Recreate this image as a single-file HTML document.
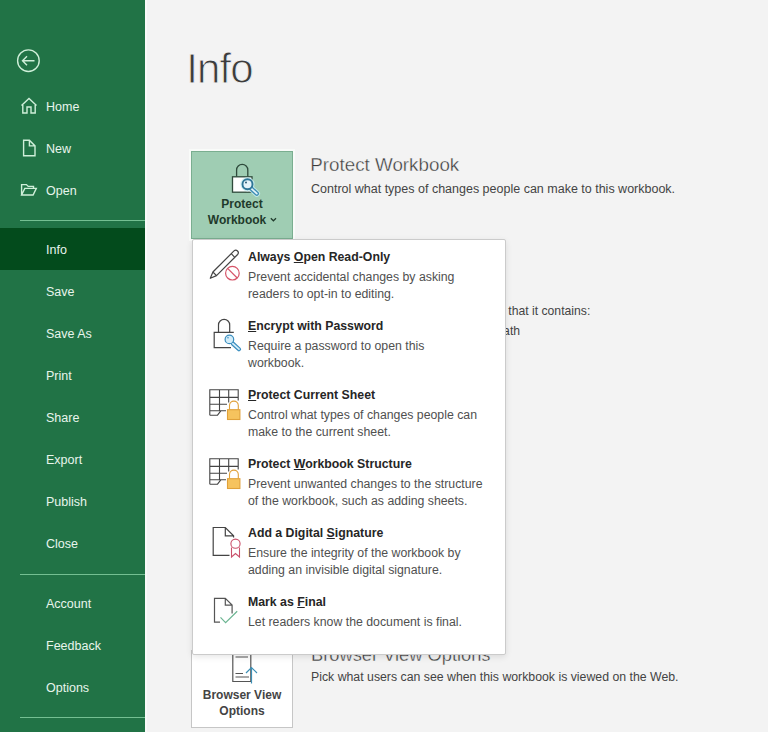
<!DOCTYPE html>
<html><head><meta charset="utf-8">
<style>
*{margin:0;padding:0;box-sizing:border-box}
html,body{width:768px;height:732px;overflow:hidden;background:#F3F3F3;font-family:"Liberation Sans",sans-serif}
.a{position:absolute;white-space:nowrap}
#side{position:absolute;left:0;top:0;width:145px;height:732px;background:#217346}
.si{position:absolute;left:46px;font-size:12.5px;line-height:12.5px;color:#E8F5EC}
.sep{position:absolute;left:20px;width:125px;height:1px;background:#74BF92}
#sel{position:absolute;left:0;top:228px;width:145px;height:42px;background:#034B1C}
svg{position:absolute;overflow:visible}
.mt{color:#444}
.dd{position:absolute;left:192px;top:239px;width:314px;height:416px;background:#fff;border:1px solid #CBCBCB;border-radius:2px;box-shadow:0 2px 6px rgba(0,0,0,0.10)}
.it{position:absolute;left:248px;font-size:12.3px;color:#505050;white-space:nowrap}
.tt{font-weight:bold;color:#262626;line-height:12.3px}
.dsc{line-height:17px}
u{text-decoration:underline;text-underline-offset:1px}
</style></head><body>
<div class="a" style="left:145px;top:0;width:2px;height:732px;background:#F9FAF9"></div>
<div id="side">
  <div id="sel"></div>
  <!-- back -->
  <svg style="left:0;top:0" width="145" height="732">
    <g fill="none" stroke="#CFEFD9" stroke-width="1.4">
      <circle cx="28.4" cy="60.7" r="10.8"/>
      <path d="M22.5 60.7H34.5M27 56.2L22.5 60.7L27 65.2"/>
      <!-- home -->
      <path d="M21.5 105.5L29 98.5L36.5 105.5M22.8 104.3V113H27V107H31V113H35.2V104.3"/>
      <!-- new -->
      <path d="M23.6 140.3H29.4L35 145.9V155.8H23.6Z M29.4 140.3V145.9H35"/>
      <!-- open -->
      <path d="M21.6 195V184.6H26.4L28.2 186.4H33.5V188.4M21.6 195L24.8 188.4H36.3L33.1 195Z"/>
    </g>
  </svg>
  <div class="si" style="top:100.7px">Home</div>
  <div class="si" style="top:142.7px">New</div>
  <div class="si" style="top:185.2px">Open</div>
  <div class="sep" style="top:220px"></div>
  <div class="si" style="top:244.2px">Info</div>
  <div class="si" style="top:286.2px">Save</div>
  <div class="si" style="top:328.2px">Save As</div>
  <div class="si" style="top:370.2px">Print</div>
  <div class="si" style="top:412.2px">Share</div>
  <div class="si" style="top:454.2px">Export</div>
  <div class="si" style="top:496.2px">Publish</div>
  <div class="si" style="top:538.2px">Close</div>
  <div class="sep" style="top:574px"></div>
  <div class="si" style="top:597.9px">Account</div>
  <div class="si" style="top:639.9px">Feedback</div>
  <div class="si" style="top:682.2px">Options</div>
  <div class="sep" style="top:717px"></div>
</div>

<!-- Info title -->
<div class="a" style="left:186.2px;top:48.4px;font-size:42px;line-height:42px;color:#3C3C3C;letter-spacing:-0.9px;-webkit-text-stroke:0.9px #F3F3F3">Info</div>

<!-- Protect workbook button -->
<div class="a" style="left:191px;top:151px;width:102px;height:88px;background:#9FCDB3;border:1px solid #7AAE90;box-shadow:0 0 0 2px #F9FBF9"></div>
<svg style="left:0;top:0" width="768" height="732">
  <g fill="none" stroke="#2E4A3B" stroke-width="1.3">
    <path d="M236.6 176.8V170A5.6 5.6 0 0 1 247.8 170V176.8"/>
    <rect x="232.5" y="176.8" width="19.5" height="15.4" fill="#fff"/>
  </g>
  <g fill="none" stroke="#C8EEF2" stroke-linecap="round" opacity="0.8">
    <circle cx="247.5" cy="184.3" r="5.6" stroke-width="3"/>
    <path d="M250.8 188.2L256.8 193.6" stroke-width="6.5"/>
  </g>
  <g stroke="#2F7697" stroke-width="1.4" fill="#E4F4FA">
    <path d="M250.8 188.2L256.8 193.6" stroke="#3D8DB5" stroke-width="4.4" stroke-linecap="round"/>
    <path d="M250.8 188.2L256.8 193.6" stroke="#E4F4FA" stroke-width="1.8" stroke-linecap="round"/>
    <circle cx="247.5" cy="184.3" r="5" stroke-width="1.9"/>
    <circle cx="246" cy="182.4" r="1" fill="#2E5E76" stroke="none"/>
  </g>
</svg>
<div class="a" style="left:191px;top:198.4px;width:102px;text-align:center;font-size:12px;line-height:12px;font-weight:bold;color:#1F3A2B">Protect</div>
<div class="a" style="left:191px;top:214.3px;width:102px;text-align:center;font-size:12px;line-height:12px;font-weight:bold;color:#1F3A2B;padding-right:10px">Workbook</div>
<svg style="left:0;top:0" width="768" height="732"><path d="M270.8 218.3L273.4 220.8L276 218.3" fill="none" stroke="#1F3A2B" stroke-width="1.2"/></svg>

<div class="a mt" style="left:310.3px;top:155.6px;font-size:18.8px;line-height:18.8px;color:#3A3A3A;-webkit-text-stroke:0.35px #F3F3F3">Protect Workbook</div>
<div class="a mt" style="left:311px;top:182.7px;font-size:12.5px;line-height:12.5px">Control what types of changes people can make to this workbook.</div>

<!-- hidden inspect texts -->
<div class="a mt" style="left:312.5px;top:304.7px;font-size:12.2px;line-height:12.2px">Before publishing this file, be aware that it contains:</div>
<div class="a mt" style="left:223px;top:324.5px;font-size:12.2px;line-height:12.2px">Document properties, author's name and absolute path</div>

<!-- Browser view options -->
<div class="a" style="left:191px;top:650px;width:102px;height:78px;background:#fff;border:1px solid #C6C6C6"></div>
<svg style="left:0;top:0" width="768" height="732">
  <g fill="none" stroke="#555" stroke-width="1.2">
    <path d="M232.8 640V681.5H250.8V640"/>
    <path d="M235.5 657H248 M235.5 673.5H243 M235.5 677H249"/>
  </g>
  <g fill="none" stroke="#3C8FB5" stroke-width="1.2">
    <path d="M251.5 683.5V667.5M246 673L251.5 667.5L257 673"/>
  </g>
</svg>
<div class="a" style="left:191px;top:688.5px;width:102px;text-align:center;font-size:12px;line-height:12px;font-weight:bold;color:#444">Browser View</div>
<div class="a" style="left:191px;top:705px;width:102px;text-align:center;font-size:12px;line-height:12px;font-weight:bold;color:#444">Options</div>
<div class="a mt" style="left:311px;top:645.8px;font-size:18.3px;line-height:18.3px;color:#3A3A3A;-webkit-text-stroke:0.35px #F3F3F3">Browser View Options</div>
<div class="a mt" style="left:311px;top:671.2px;font-size:12.3px;line-height:12.3px">Pick what users can see when this workbook is viewed on the Web.</div>

<!-- dropdown -->
<div class="dd"></div>
<svg style="left:0;top:0" width="768" height="732">
  <!-- pencil -->
  <g fill="none" stroke="#444" stroke-width="1.2" stroke-linejoin="round">
    <path d="M210.3 278.3L212.9 272L234 250.9A2.55 2.55 0 0 1 237.6 254.5L216.5 275.6Z M212.9 272L216.5 275.6 M231.2 253.7L234.8 257.3"/>
  </g>
  <g fill="none" stroke="#D65468" stroke-width="1.2">
    <circle cx="232.4" cy="273.2" r="6.8"/>
    <path d="M227.6 268.4L237.2 278"/>
  </g>
  <!-- lock + key -->
  <g fill="none" stroke="#444" stroke-width="1.2">
    <path d="M218.5 332.3V325A5.6 5.6 0 0 1 229.7 325V332.3"/>
    <path d="M233.8 332.3H214.2V347.6H231"/>
  </g>
  <g stroke="#3A8EBF" stroke-width="1.2" fill="#D4EDF9">
    <path d="M232.8 343.6L239 349.2" stroke-width="4.2" stroke-linecap="round"/>
    <path d="M232.8 343.6L239 349.2" stroke="#D4EDF9" stroke-width="1.8" stroke-linecap="round"/>
    <circle cx="229.4" cy="339.4" r="4.3"/>
    <circle cx="228" cy="337.8" r="0.8" fill="#3A8EBF" stroke="none"/>
  </g>
  <!-- grid + lock (x2) -->
  <g id="gl" fill="none" stroke="#444" stroke-width="1.1">
    <path d="M209.8 415.2V389.8H238.2V400.5 M209.8 397.4H238.2 M209.8 404.2H227 M209.8 410.7H226 M219.5 389.8V410.7 M228.7 389.8V402.5 M209.8 415.2H217.5L221 410.7"/>
  </g>
  <g fill="#F6C35E" stroke="#E0A13A" stroke-width="1.1">
    <path d="M229.5 409.7V405.5A4.4 4.4 0 0 1 238.3 405.5V409.7" fill="none"/>
    <rect x="227.5" y="409.7" width="12.4" height="9.8"/>
  </g>
  <g transform="translate(0 69)">
    <path d="M209.8 415.2V389.8H238.2V400.5 M209.8 397.4H238.2 M209.8 404.2H227 M209.8 410.7H226 M219.5 389.8V410.7 M228.7 389.8V402.5 M209.8 415.2H217.5L221 410.7" fill="none" stroke="#444" stroke-width="1.1"/>
    <g fill="#F6C35E" stroke="#E0A13A" stroke-width="1.1">
      <path d="M229.5 409.7V405.5A4.4 4.4 0 0 1 238.3 405.5V409.7" fill="none"/>
      <rect x="227.5" y="409.7" width="12.4" height="9.8"/>
    </g>
  </g>
  <!-- doc + ribbon -->
  <g fill="none" stroke="#444" stroke-width="1.2">
    <path d="M229.5 555.3H213.2V527.5H225.3L233.6 535.8V537.5 M225.3 527.5V535.8H233.6"/>
  </g>
  <g fill="none" stroke="#C9506A" stroke-width="1.1">
    <circle cx="235.5" cy="543.7" r="4.6"/>
    <path d="M231.5 547.5V557L235.5 553.5L239.5 557V547.5"/>
  </g>
  <!-- doc + check -->
  <g fill="none" stroke="#555" stroke-width="1.2">
    <path d="M220 622.2H214.5V598.3H225.3L232.1 605.1V613.5 M225.3 598.3V605.1H232.1"/>
  </g>
  <path d="M220.5 617.4L225.6 622.6L237.2 611.3" fill="none" stroke="#6CB592" stroke-width="1.2"/>
</svg>
<div class="it tt" style="top:250.7px">Always <u>O</u>pen Read-Only</div>
<div class="it dsc" style="top:269.1px">Prevent accidental changes by asking<br>readers to opt-in to editing.</div>
<div class="it tt" style="top:319.7px"><u>E</u>ncrypt with Password</div>
<div class="it dsc" style="top:338.1px">Require a password to open this<br>workbook.</div>
<div class="it tt" style="top:388.7px"><u>P</u>rotect Current Sheet</div>
<div class="it dsc" style="top:407.1px">Control what types of changes people can<br>make to the current sheet.</div>
<div class="it tt" style="top:457.7px">Protect <u>W</u>orkbook Structure</div>
<div class="it dsc" style="top:476.1px">Prevent unwanted changes to the structure<br>of the workbook, such as adding sheets.</div>
<div class="it tt" style="top:526.7px">Add a Digital <u>S</u>ignature</div>
<div class="it dsc" style="top:545.1px">Ensure the integrity of the workbook by<br>adding an invisible digital signature.</div>
<div class="it tt" style="top:595.7px">Mark as <u>F</u>inal</div>
<div class="it dsc" style="top:614.1px">Let readers know the document is final.</div>
</body></html>
